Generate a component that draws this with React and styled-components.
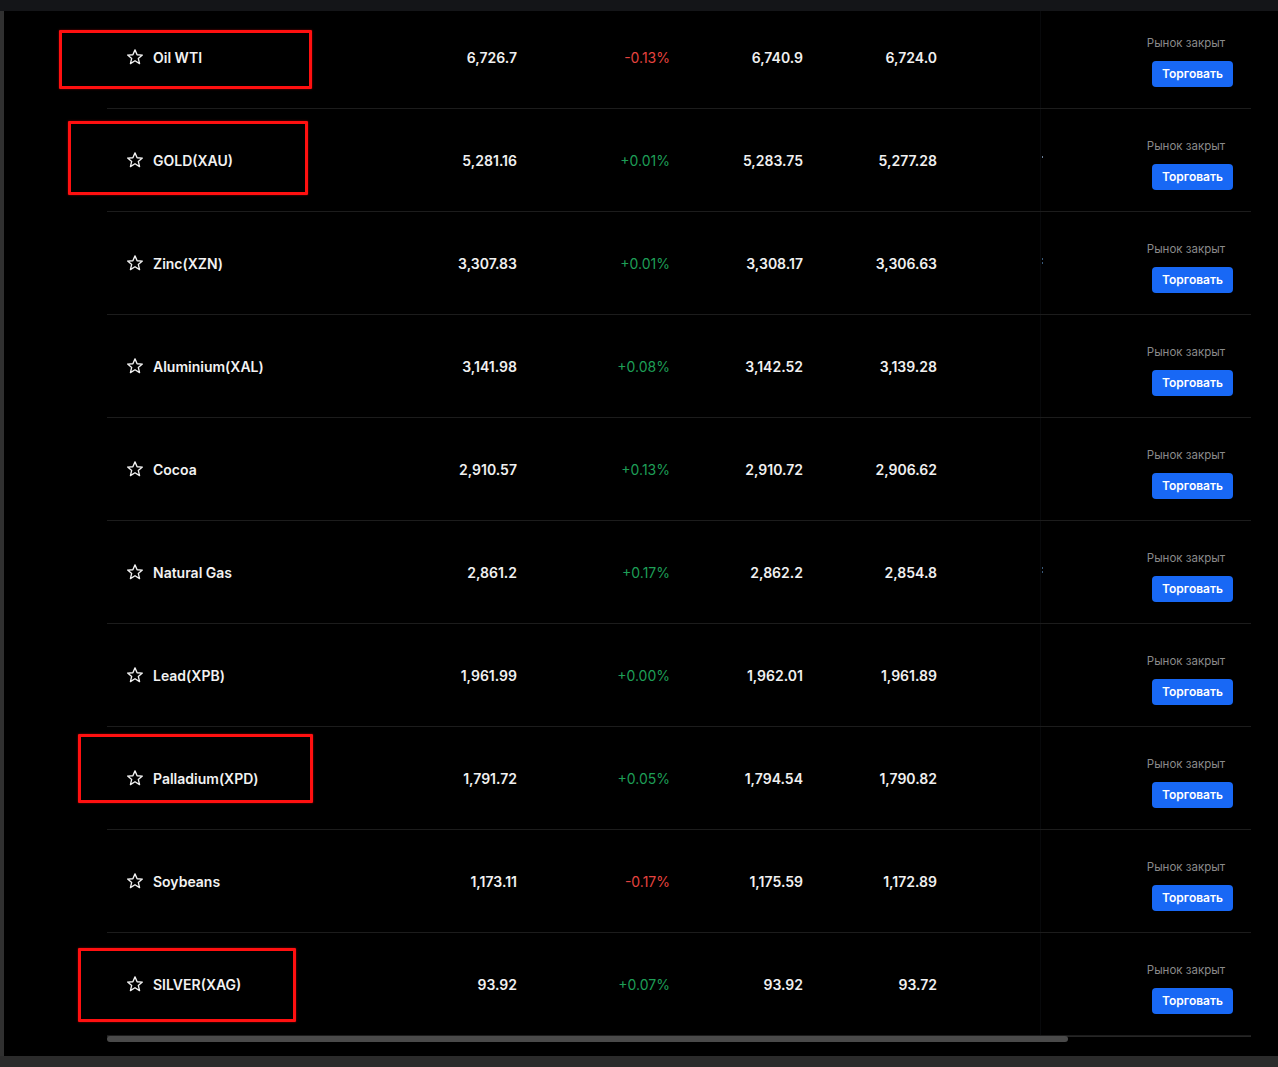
import React from "react";
import styled, { createGlobalStyle } from "styled-components";

const GlobalStyle = createGlobalStyle`
  *, *::before, *::after {
    box-sizing: border-box;
  }
  html, body {
    margin: 0;
    padding: 0;
    background: #2b2b2b;
  }
  body {
    font-family: Inter, "Noto Sans", "Liberation Sans", sans-serif;
    -webkit-font-smoothing: antialiased;
  }
`;

const ROWS = [
  { name: "Oil WTI", price: "6,726.7", change: "-0.13%", bid: "6,740.9", ask: "6,724.0" },
  { name: "GOLD(XAU)", price: "5,281.16", change: "+0.01%", bid: "5,283.75", ask: "5,277.28", mark: 1 },
  { name: "Zinc(XZN)", price: "3,307.83", change: "+0.01%", bid: "3,308.17", ask: "3,306.63", mark: 2 },
  { name: "Aluminium(XAL)", price: "3,141.98", change: "+0.08%", bid: "3,142.52", ask: "3,139.28" },
  { name: "Cocoa", price: "2,910.57", change: "+0.13%", bid: "2,910.72", ask: "2,906.62" },
  { name: "Natural Gas", price: "2,861.2", change: "+0.17%", bid: "2,862.2", ask: "2,854.8", mark: 2 },
  { name: "Lead(XPB)", price: "1,961.99", change: "+0.00%", bid: "1,962.01", ask: "1,961.89" },
  { name: "Palladium(XPD)", price: "1,791.72", change: "+0.05%", bid: "1,794.54", ask: "1,790.82" },
  { name: "Soybeans", price: "1,173.11", change: "-0.17%", bid: "1,175.59", ask: "1,172.89" },
  { name: "SILVER(XAG)", price: "93.92", change: "+0.07%", bid: "93.92", ask: "93.72" },
];

// annotation boxes drawn over the screenshot, in panel coordinates
const MARKS = [
  { left: 55, top: 19, width: 253, height: 59 },
  { left: 64, top: 110, width: 240, height: 74 },
  { left: 74, top: 723, width: 235, height: 69 },
  { left: 74, top: 937, width: 218, height: 74 },
];

const Screen = styled.div`
  width: 1278px;
  height: 1067px;
  display: flex;
  flex-direction: column;
  overflow: hidden;
  background: #2b2b2b;
`;

const TopBand = styled.div`
  height: 11px;
  flex: none;
  background: #141518;
`;

const Middle = styled.div`
  display: flex;
  height: 1045px;
  flex: none;
`;

const SideStrip = styled.div`
  width: 4px;
  flex: none;
  background: #303030;
`;

const Panel = styled.div`
  position: relative;
  flex: 1;
  background: #000;
  overflow: hidden;
  padding-left: 103px;
  padding-right: 27px;
  display: flex;
  flex-direction: column;
`;

const Rows = styled.div`
  margin-top: -5px;
  display: flex;
  flex-direction: column;
`;

const Row = styled.div`
  height: 103px;
  display: flex;
  align-items: center;
  border-bottom: 1px solid #1c1c1c;
`;

const NameCell = styled.div`
  width: 260px;
  padding-left: 19px;
  display: flex;
  align-items: center;
  gap: 9px;
  color: #f2f2f2;
  font-size: 14px;
  font-weight: 600;
`;

const NumCell = styled.div`
  width: ${({ $w }) => $w}px;
  text-align: right;
  font-size: 14px;
  font-weight: ${({ $tone }) => ($tone ? 400 : 600)};
  color: ${({ $tone }) =>
    $tone === "up" ? "#1e9e57" : $tone === "down" ? "#e5433f" : "#f0f0f0"};
`;

const Spacer = styled.div`
  flex: 1;
  align-self: stretch;
`;

const ActionCell = styled.div`
  width: 211px;
  align-self: stretch;
  position: relative;
  border-left: 1px solid #08090b;
  display: flex;
  flex-direction: column;
  align-items: flex-end;
  justify-content: center;
  gap: 11px;
  padding: 8px 18px 0 0;
`;

const Dot = styled.span`
  position: absolute;
  left: 1px;
  top: ${({ $two }) => ($two ? 46 : 47)}px;
  width: 1px;
  height: ${({ $two }) => ($two ? 6 : 2)}px;
  background: ${({ $two }) =>
    $two ? "linear-gradient(#3a5a7a 0 2px, transparent 2px 4px, #3a5a7a 4px)" : "#6a7f99"};
`;

const Status = styled.div`
  margin-right: 8px;
  font-size: 11.5px;
  color: #8a8a8a;
  line-height: 14px;
`;

const TradeButton = styled.button`
  width: 81px;
  height: 26px;
  border: none;
  border-radius: 4px;
  background: #1868f5;
  color: #fff;
  font-family: inherit;
  font-size: 12px;
  font-weight: 600;
  padding: 0;
  cursor: pointer;
`;

const ScrollTrack = styled.div`
  height: 1px;
  background: #262626;
  position: relative;
`;

const ScrollThumb = styled.div`
  width: 961px;
  height: 6px;
  border-radius: 3px;
  background: #4a4a4a;
`;

const RedBox = styled.div`
  position: absolute;
  border: 3px solid #ff1010;
  box-shadow: 0 0 2px rgba(255, 0, 0, 0.6);
  border-radius: 1px;
  pointer-events: none;
`;

const BottomBand = styled.div`
  flex: 1;
  background: #2b2b2b;
`;

const StarIcon = () => (
  <svg width="18" height="18" viewBox="0 0 24 24" fill="none">
    <polygon
      points="12,2.5 14.8,9 21.8,9.4 16.4,13.9 18.1,20.8 12,17 5.9,20.8 7.6,13.9 2.2,9.4 9.2,9"
      stroke="#f2f2f2"
      strokeWidth="1.8"
      strokeLinejoin="round"
    />
  </svg>
);

const tone = (c) => (c.startsWith("-") ? "down" : "up");

export default function App() {
  return (
    <Screen>
      <GlobalStyle />
      <TopBand />
      <Middle>
        <SideStrip />
        <Panel>
          <Rows>
            {ROWS.map((r) => (
              <Row key={r.name}>
                <NameCell>
                  <StarIcon />
                  <span>{r.name}</span>
                </NameCell>
                <NumCell $w={150}>{r.price}</NumCell>
                <NumCell $w={153} $tone={tone(r.change)}>{r.change}</NumCell>
                <NumCell $w={133}>{r.bid}</NumCell>
                <NumCell $w={134}>{r.ask}</NumCell>
                <Spacer />
                <ActionCell>
                  {r.mark ? <Dot $two={r.mark === 2} /> : null}
                  <Status>Рынок закрыт</Status>
                  <TradeButton>Торговать</TradeButton>
                </ActionCell>
              </Row>
            ))}
          </Rows>
          <ScrollTrack>
            <ScrollThumb />
          </ScrollTrack>
          {MARKS.map((m, i) => (
            <RedBox
              key={i}
              style={{ left: m.left, top: m.top, width: m.width, height: m.height }}
            />
          ))}
        </Panel>
      </Middle>
      <BottomBand />
    </Screen>
  );
}
